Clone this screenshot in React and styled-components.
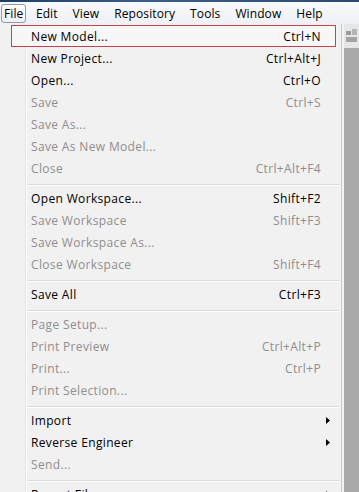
import React from "react"
import styled, { createGlobalStyle } from "styled-components"

const Global = createGlobalStyle`
  html, body {
    margin: 0;
    padding: 0;
    background: #a9a9a9;
    overflow: hidden;
  }
  body {
    font-family: "Open Sans", "Noto Sans", "DejaVu Sans", sans-serif;
    font-size: 12px;
    letter-spacing: 0.35px;
  }
`

const Screen = styled.div`
  width: 359px;
  height: 492px;
  display: flex;
  flex-direction: column;
  overflow: hidden;
`

const TitleStrip = styled.div`
  height: 2px;
  background: linear-gradient(to right, #1f3d63, #3a5f8a 40%, #2a4a72);
`

const MenuBar = styled.div`
  height: 22px;
  display: flex;
  align-items: center;
  padding-left: 1px;
  letter-spacing: 0.1px;
  background: linear-gradient(#f8f9fb, #eef1f5);
  color: #000;
`

const BarItem = styled.div`
  height: 19px;
  display: flex;
  align-items: center;
  padding: 0 ${(p) => (p.$first ? "2px" : "6.5px")};
  margin-right: ${(p) => (p.$first ? "2px" : "0")};
  border: 1px solid ${(p) => (p.$active ? "#8b9aaa" : "transparent")};
  border-radius: 3px;
  background: ${(p) => (p.$active ? "linear-gradient(#fdfdfe, #eef1f4)" : "transparent")};
  box-sizing: border-box;
`

const Body = styled.div`
  flex: 1;
  display: flex;
  min-height: 0;
`

const Menu = styled.div`
  width: 342px;
  box-sizing: border-box;
  padding-top: 1px;
  border-right: 1px solid #c9c9c9;
  background: linear-gradient(
    to right,
    #f1f1f1 25px,
    #e2e3e3 25px,
    #e2e3e3 26px,
    #ffffff 26px,
    #ffffff 27px,
    #f1f1f1 27px
  );
`

const Side = styled.div`
  flex: 1;
  display: flex;
  flex-direction: column;
  border-left: 2px solid #f3f3f3;
  background: #a9a9a9;
`

const ToolStrip = styled.div`
  height: 24px;
  background: #e6e6e6;
  display: flex;
  align-items: center;
  padding-left: 2px;
`

const Row = styled.div`
  height: 22px;
  box-sizing: border-box;
  margin: 0 5px 0 11px;
  padding-left: 19px;
  display: flex;
  align-items: center;
  border: 1px solid ${(p) => (p.$hot ? "#c2434b" : "transparent")};
  background: ${(p) => (p.$hot ? "#f7f7f7" : "transparent")};
  color: ${(p) => (p.$off ? "#8e8e8e" : "#000")};
  white-space: nowrap;
`

const Label = styled.span`
  flex: 1;
`

const Keys = styled.span`
  text-align: right;
`

const ArrowSlot = styled.span`
  width: 14px;
  display: flex;
  justify-content: center;
  align-items: center;
`

const Sep = styled.div`
  height: 8px;
  display: flex;
  flex-direction: column;
  justify-content: flex-end;
  padding-bottom: 1px;
  box-sizing: border-box;
  margin: 0 2px 0 27px;
  &::before {
    content: "";
    height: 1px;
    background: #dcdcdc;
  }
  &::after {
    content: "";
    height: 1px;
    background: #ffffff;
  }
`

const Arrow = () => (
  <svg width="4" height="7" viewBox="0 0 4 7">
    <path d="M0 0 L4 3.5 L0 7 Z" fill="#000" />
  </svg>
)

const groups = [
  [
    ["New Model...", "Ctrl+N", { hot: true }],
    ["New Project...", "Ctrl+Alt+J"],
    ["Open...", "Ctrl+O"],
    ["Save", "Ctrl+S", { off: true }],
    ["Save As...", "", { off: true }],
    ["Save As New Model...", "", { off: true }],
    ["Close", "Ctrl+Alt+F4", { off: true }],
  ],
  [
    ["Open Workspace...", "Shift+F2"],
    ["Save Workspace", "Shift+F3", { off: true }],
    ["Save Workspace As...", "", { off: true }],
    ["Close Workspace", "Shift+F4", { off: true }],
  ],
  [["Save All", "Ctrl+F3"]],
  [
    ["Page Setup...", "", { off: true }],
    ["Print Preview", "Ctrl+Alt+P", { off: true }],
    ["Print...", "Ctrl+P", { off: true }],
    ["Print Selection...", "", { off: true }],
  ],
  [
    ["Import", "", { sub: true }],
    ["Reverse Engineer", "", { sub: true }],
    ["Send...", "", { off: true }],
  ],
  [["Recent Files", "", { sub: true }]],
]

const bar = ["File", "Edit", "View", "Repository", "Tools", "Window", "Help"]

export default function App() {
  return (
    <Screen>
      <Global />
      <TitleStrip />
      <MenuBar>
        {bar.map((b, i) => (
          <BarItem key={b} $first={i === 0} $active={i === 0}>
            {b}
          </BarItem>
        ))}
      </MenuBar>
      <Body>
        <Menu>
          {groups.map((g, gi) => (
            <React.Fragment key={gi}>
              {gi > 0 && <Sep />}
              {g.map(([label, keys, opt = {}]) => (
                <Row key={label} $hot={opt.hot} $off={opt.off}>
                  <Label>{label}</Label>
                  <Keys>{keys}</Keys>
                  <ArrowSlot>{opt.sub && <Arrow />}</ArrowSlot>
                </Row>
              ))}
            </React.Fragment>
          ))}
        </Menu>
        <Side>
          <ToolStrip>
            <svg width="12" height="14" viewBox="0 0 12 14">
              <rect x="0" y="2" width="5" height="4" fill="#9a9a9a" />
              <rect x="6" y="0" width="5" height="6" fill="#b5b5b5" />
              <rect x="0" y="8" width="11" height="5" fill="#a3a3a3" />
            </svg>
          </ToolStrip>
        </Side>
      </Body>
    </Screen>
  )
}
